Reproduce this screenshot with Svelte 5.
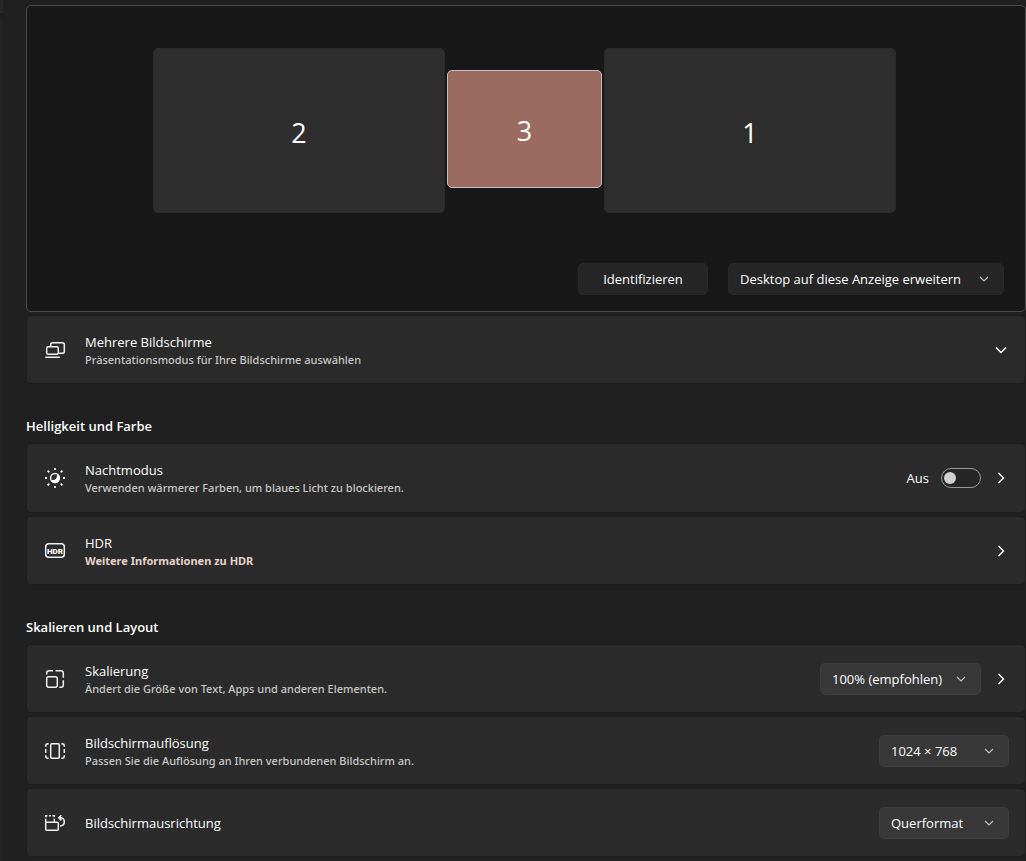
<script>
  let nightLight = $state(false);
  let mode = $state('Desktop auf diese Anzeige erweitern');
  let selected = $state(3);

  const displays = [
    { id: 2, kind: 'large' },
    { id: 3, kind: 'small' },
    { id: 1, kind: 'large' }
  ];
</script>

{#snippet chevronDown()}
  <svg class="chevron" viewBox="0 0 16 16" aria-hidden="true"><path d="M3 5.5 8 10.5 13 5.5" /></svg>
{/snippet}

{#snippet chevronRight()}
  <svg class="chevron" viewBox="0 0 16 16" aria-hidden="true"><path d="M5.5 3 10.5 8 5.5 13" /></svg>
{/snippet}

{#snippet caret()}
  <svg class="caret" viewBox="0 0 10 10" aria-hidden="true"><path d="M1 3 5 7 9 3" /></svg>
{/snippet}

<div class="shell">
  <div class="edge"></div>
  <main>
    <section class="arrange" aria-label="Anzeigen">
      <div class="displays">
        {#each displays as d}
          <button class="display {d.kind}" class:active={selected === d.id} onclick={() => (selected = d.id)}>{d.id}</button>
        {/each}
      </div>
      <div class="actions">
        <button class="identify">Identifizieren</button>
        <span class="picker dark wide">
          <select aria-label="Anzeigemodus" bind:value={mode}>
            <option>Desktop auf diese Anzeige erweitern</option>
          </select>
          {@render caret()}
        </span>
      </div>
    </section>

    <div class="group first">
      <div class="card">
        <svg class="icon" viewBox="0 0 20 20" aria-hidden="true">
          <rect x="1.7" y="6.7" width="11.6" height="7.6" rx="1.5" />
          <path d="M5.7 6.5V4.5Q5.7 2.7 7.5 2.7H17.5Q19.3 2.7 19.3 4.5V11.5Q19.3 13.3 17.5 13.3H13.5M.2 17.3H14.8" />
        </svg>
        <div class="label">
          <span class="title">Mehrere Bildschirme</span>
          <span class="sub">Präsentationsmodus für Ihre Bildschirme auswählen</span>
        </div>
        <button class="go" aria-label="Mehrere Bildschirme erweitern">{@render chevronDown()}</button>
      </div>
    </div>

    <h2>Helligkeit und Farbe</h2>
    <div class="group">
      <div class="card has-switch">
        <svg class="icon" viewBox="0 0 20 20" aria-hidden="true">
          <circle cx="10" cy="10" r="4.4" />
          <path class="solid" d="M13.4 6.6A4.8 4.8 0 1 1 6.6 13.4L7 12Q9.8 12.2 11 10.8 12.2 9.4 12 7Z" />
          <path class="rays" d="M10 0V2M10 18V20M0 10H2M18 10H20M2.6 2.6 4.3 4.3M15.7 15.7 17.4 17.4M2.6 17.4 4.3 15.7M15.7 4.3 17.4 2.6" />
        </svg>
        <div class="label">
          <span class="title">Nachtmodus</span>
          <span class="sub">Verwenden wärmerer Farben, um blaues Licht zu blockieren.</span>
        </div>
        <label class="switch">
          <span>{nightLight ? 'Ein' : 'Aus'}</span>
          <input type="checkbox" role="switch" bind:checked={nightLight} />
        </label>
        <button class="go" aria-label="Nachtmodus öffnen">{@render chevronRight()}</button>
      </div>
      <div class="card">
        <svg class="icon" viewBox="0 0 20 20" aria-hidden="true">
          <rect x=".7" y="2.7" width="18.6" height="13.6" rx="3" />
          <text x="10" y="12.5" text-anchor="middle">HDR</text>
        </svg>
        <div class="label">
          <span class="title">HDR</span>
          <a class="sub" href="#hdr">Weitere Informationen zu HDR</a>
        </div>
        <button class="go" aria-label="HDR öffnen">{@render chevronRight()}</button>
      </div>
    </div>

    <h2>Skalieren und Layout</h2>
    <div class="group">
      <div class="card">
        <svg class="icon" viewBox="0 0 20 20" aria-hidden="true">
          <rect x="1.7" y="7.7" width="10.6" height="10.6" rx="2" />
          <path d="M1.7 5.5V4Q1.7 1.7 4 1.7H8M10.5 1.7H16Q18.3 1.7 18.3 4V8.7M18.3 11.3V16Q18.3 18.3 16 18.3H14.3" />
        </svg>
        <div class="label">
          <span class="title">Skalierung</span>
          <span class="sub">Ändert die Größe von Text, Apps und anderen Elementen.</span>
        </div>
        <span class="picker medium">
          <select aria-label="Skalierung"><option>100% (empfohlen)</option></select>
          {@render caret()}
        </span>
        <button class="go" aria-label="Skalierung öffnen">{@render chevronRight()}</button>
      </div>
      <div class="card">
        <svg class="icon" viewBox="0 0 20 20" aria-hidden="true">
          <rect x="5.7" y="2.7" width="8.6" height="14.6" rx="1.2" />
          <path d="M3.7 2.7H3Q.7 2.7 .7 5V5.7M.7 8V12M.7 14.3V15Q.7 17.3 3 17.3H3.7M16.3 2.7H17Q19.3 2.7 19.3 5V5.7M19.3 8V12M19.3 14.3V15Q19.3 17.3 17 17.3H16.3" />
        </svg>
        <div class="label">
          <span class="title">Bildschirmauflösung</span>
          <span class="sub">Passen Sie die Auflösung an Ihren verbundenen Bildschirm an.</span>
        </div>
        <span class="picker">
          <select aria-label="Bildschirmauflösung"><option>1024 × 768</option></select>
          {@render caret()}
        </span>
      </div>
      <div class="card">
        <svg class="icon" viewBox="0 0 20 20" aria-hidden="true">
          <rect x=".7" y="9.2" width="12.6" height="8.1" rx="1" />
          <path d="M.7 9V5.8M.7 4.2V2.7H2.4M4 2.7H6M7.6 2.7H9.3V4.2M9.3 5.8V9M14.2 4.8H16Q19.3 5.4 19.3 9T15 13M16.4 2.2 13.8 4.8 16.4 7.4" />
        </svg>
        <div class="label">
          <span class="title">Bildschirmausrichtung</span>
        </div>
        <span class="picker">
          <select aria-label="Bildschirmausrichtung"><option>Querformat</option></select>
          {@render caret()}
        </span>
      </div>
    </div>
  </main>
</div>

<style>
  :global(body) {
    background: #202020;
  }
  .shell {
    display: grid;
    grid-template-columns: 3px minmax(0, 1fr);
    min-height: 100vh;
    box-sizing: border-box;
    color: #fff;
    font: 13px/20px 'Open Sans', 'Noto Sans', sans-serif;
  }
  .edge {
    background: linear-gradient(#272727 13px, #1c1c1c 13px, #242424 20px);
  }
  main {
    padding: 5px 0 3px 23px;
  }
  button,
  select {
    font: inherit;
    color: inherit;
    margin: 0;
  }
  .arrange {
    display: flex;
    flex-direction: column;
    gap: 50px;
    padding: 42px 21px 16px 18px;
    border: 1px solid #4c4c4c;
    border-radius: 5px;
    background: #181818;
  }
  .displays {
    display: flex;
    justify-content: center;
    align-items: center;
    gap: 2px;
  }
  .display {
    box-sizing: border-box;
    padding: 4px 0 0;
    border: 1px solid #2b2b2b;
    border-radius: 5px;
    background: #2e2e2e;
    font-size: 27px;
  }
  .large {
    width: 292px;
    height: 165px;
  }
  .small {
    width: 155px;
    height: 118px;
    margin-bottom: 4px;
  }
  .display.active {
    border-color: #c9bfbc;
    background: #9b6a60;
  }
  .actions {
    display: flex;
    justify-content: flex-end;
    gap: 20px;
  }
  .identify {
    width: 130px;
    height: 32px;
    padding: 0;
    border: 1px solid #2a2a2a;
    border-radius: 5px;
    background: #262626;
  }
  .picker {
    display: grid;
    align-items: center;
    width: 130px;
  }
  .picker.medium {
    width: 161px;
    margin-right: 12px;
  }
  .picker.wide {
    width: 276px;
  }
  .picker > :global(*) {
    grid-area: 1 / 1;
  }
  select {
    appearance: none;
    width: 100%;
    height: 32px;
    padding: 0 30px 0 11px;
    border: 1px solid #3d3d3d;
    border-radius: 5px;
    background: #383838;
  }
  .dark select {
    border-color: #2a2a2a;
    background: #262626;
  }
  .caret {
    justify-self: end;
    width: 10px;
    height: 10px;
    margin-right: 15px;
    pointer-events: none;
    fill: none;
    stroke: #c0c0c0;
    stroke-width: 1.2;
  }
  .group {
    display: grid;
    gap: 3px;
  }
  .first {
    margin-top: 3px;
  }
  .card {
    display: flex;
    align-items: center;
    box-sizing: border-box;
    min-height: 69px;
    padding: 0 16px 0 18px;
    border: 1px solid #1d1d1d;
    border-radius: 5px;
    background: #2b2b2b;
  }
  .has-switch {
    min-height: 70px;
  }
  .icon {
    flex: none;
    width: 20px;
    height: 20px;
    margin-right: 20px;
    overflow: visible;
    fill: none;
    stroke: #f0f0f0;
    stroke-width: 1.5;
  }
  .icon .solid {
    fill: #fff;
    stroke: none;
  }
  .icon .rays {
    stroke-width: 1.8;
  }
  .icon text {
    fill: #fff;
    stroke: none;
    font: 900 8px Roboto, sans-serif;
  }
  .label {
    display: flex;
    flex: 1;
    flex-direction: column;
    align-items: flex-start;
    min-width: 0;
  }
  .sub {
    color: #c8c8c8;
    font-family: 'Noto Sans', sans-serif;
    font-size: 11px;
    font-weight: 500;
    line-height: 16px;
  }
  a.sub {
    color: #e8d3ca;
    font-weight: 700;
    text-decoration: none;
  }
  h2 {
    margin: 0;
    padding: 32px 0 7px;
    font-size: 13px;
    font-weight: 600;
    line-height: 20px;
  }
  .go {
    display: flex;
    padding: 0;
    border: 0;
    background: none;
  }
  .chevron {
    width: 16px;
    height: 16px;
    fill: none;
    stroke: #fff;
    stroke-width: 1.4;
  }
  .switch {
    display: flex;
    align-items: center;
    gap: 12px;
    margin-right: 12px;
  }
  .switch input {
    appearance: none;
    display: flex;
    align-items: center;
    box-sizing: border-box;
    width: 40px;
    height: 20px;
    margin: 0;
    padding: 0 2px;
    border: 1px solid #9a9a9a;
    border-radius: 10px;
    background: #262626;
  }
  .switch input::before {
    content: '';
    width: 12px;
    height: 12px;
    border-radius: 6px;
    background: #cfcfcf;
  }
  .switch input:checked {
    justify-content: flex-end;
  }
</style>
